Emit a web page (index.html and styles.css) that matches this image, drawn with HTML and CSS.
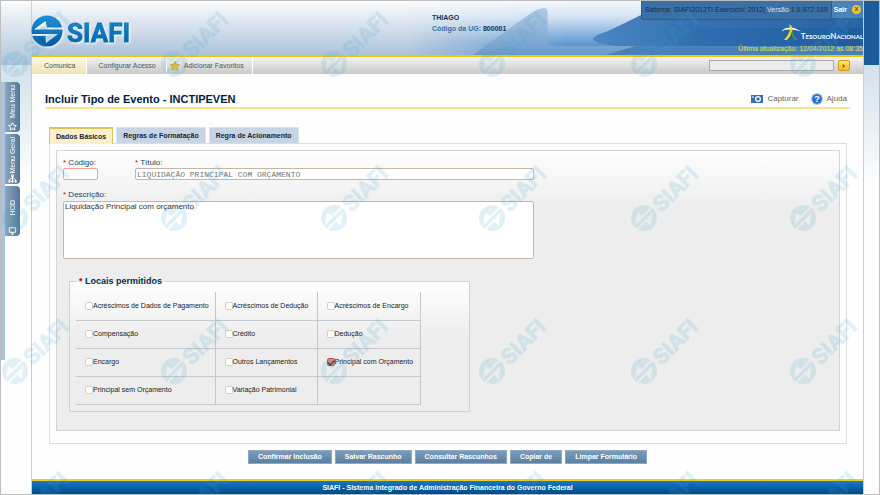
FILE: index.html
```html
<!DOCTYPE html>
<html lang="pt-BR">
<head>
<meta charset="utf-8">
<title>SIAFI - Incluir Tipo de Evento</title>
<link rel="stylesheet" href="styles.css">
</head>
<body>
<svg class="defs" width="0" height="0" aria-hidden="true">
  <defs>
    <linearGradient id="logoFill" x1="0" y1="0" x2="0" y2="1">
      <stop offset="0" stop-color="#1b8fd6"/><stop offset="1" stop-color="#005a9e"/>
    </linearGradient>
    <mask id="bolt">
      <rect x="-20" y="-20" width="40" height="40" fill="#fff"/>
      <path d="M-13 -1.500 L-1.500 -10 L0 -3.500 H16 V-1.500 Z M-16 3 H11 L-1 12 L-1.500 5 H-16 Z" fill="#000"/>
    </mask>
    <g id="mark"><circle r="15.500" mask="url(#bolt)"/></g>
    <g id="wm" transform="rotate(-45)">
      <circle r="15.500" mask="url(#bolt)" transform="scale(.84)"/>
      <text x="16" y="9">SIAFI</text>
    </g>
  </defs>
</svg>

<div class="page">
  <aside class="side">
    <nav class="side-tabs">
      <a href="#"><span>Meu Menu</span>
        <svg viewBox="0 0 10 10"><path d="M5 .8l1.300 2.800 3 .3-2.300 2 .7 3L5 7.400 2.300 8.900l.7-3-2.300-2 3-.3z"/></svg></a>
      <a href="#"><span>Menu Geral</span>
        <svg viewBox="0 0 10 10"><path d="M5 2v3M1.500 8.500V6.500L5 4l3.500 2.500v2M5 4v4.500M4 1h2v2H4zM.8 7.500h1.500v1.500H.8zM4.200 7.500h1.500v1.500H4.200zM7.700 7.500h1.500v1.500H7.700z"/></svg></a>
      <a href="#"><span>HOD</span>
        <svg viewBox="0 0 10 10"><path d="M1.500 2h7v5h-7zM3.500 9h3M5 7v2"/></svg></a>
    </nav>
  </aside>

  <div class="shell">
    <header class="header">
      <svg class="swoosh" viewBox="0 0 458 54" preserveAspectRatio="none" aria-hidden="true">
        <defs>
          <linearGradient id="sky" x1="0" y1="0" x2="0" y2="1">
            <stop offset="0" stop-color="#f4f8fd"/><stop offset=".3" stop-color="#d2e2f4"/><stop offset=".8" stop-color="#5f98cf"/><stop offset="1" stop-color="#5f98cf"/>
          </linearGradient>
          <linearGradient id="fade"><stop offset="0" stop-color="#000"/><stop offset=".35" stop-color="#fff"/></linearGradient>
          <mask id="fadeMask"><rect width="458" height="54" fill="url(#fade)"/></mask>
          <linearGradient id="hill" x1="0" y1="0" x2="0" y2="1">
            <stop offset="0" stop-color="#b3cbe4"/><stop offset="1" stop-color="#6a9aca"/>
          </linearGradient>
          <linearGradient id="deep"><stop offset="0" stop-color="#4c88c2"/><stop offset=".4" stop-color="#2f6dae"/><stop offset="1" stop-color="#1f5c9f"/></linearGradient>
        </defs>
        <rect width="458" height="54" fill="url(#sky)" mask="url(#fadeMask)"/>
        <path d="M67 54 L124 13 Q132 7 139 7 Q142 8 142 12 V40 Q142 45 148 45 H458 V54 Z" fill="url(#hill)"/>
        <path d="M187 38 Q190 34 200 31 Q225 20 262 0 H458 V45 H210 Q190 43 187 38 Z" fill="url(#deep)"/>
        <path d="M230 45 H458 V54 H200 Z" fill="#2f6dae" opacity=".6"/>
        <path d="M286 0 V22 Q286 27 292 27 H458 V0 Z" fill="#6fa0cf" opacity=".12"/>
      </svg>
      <svg class="logo" viewBox="0 0 112 36" role="img" aria-label="SIAFI">
        <use href="#mark" x="15" y="17" fill="url(#logoFill)"/>
        <text x="35" y="28" fill="url(#logoFill)">SIAFI</text>
      </svg>
      <div class="user">
        <strong>THIAGO</strong>
        <p>Código da UG: <strong>800001</strong></p>
      </div>
      <div class="status">
        <div class="status-bar">
          <p>Sistema: SIAFI2012TI Exercício: 2012| <b>Versão</b> 1.6.972.169</p>
          <a href="#" class="exit">Sair <i>x</i></a>
        </div>
        <div class="brand">
          <svg viewBox="0 0 20 17" aria-hidden="true">
            <path d="M0 7Q9 0 20 7.500Q10 4 0 7z" fill="#fff"/>
            <path d="M8 0q4 2 3.500 6q-1.500 6-5.500 10h-3q5-6 6-10q.5-3-1-6z" fill="#f5d923"/>
            <path d="M11.500 6q0 6 5 10h-2.500q-4-4-3.500-8z" fill="#38a34a"/>
          </svg>
          <span>TesouroNacional</span>
        </div>
        <p class="updated">Última atualização: 12/04/2012 às 08:35</p>
      </div>
    </header>

    <nav class="menubar">
      <a href="#" class="active">Comunica</a>
      <a href="#">Configurar Acesso</a>
      <a href="#" class="fav"><svg viewBox="0 0 10 10" aria-hidden="true"><path d="M5 .3l1.400 3.100 3.400.3-2.600 2.200.8 3.400L5 7.500 2 9.300l.8-3.400L.2 3.700l3.400-.3z"/></svg>Adicionar Favoritos</a>
      <form class="search">
        <input type="text" aria-label="Pesquisar">
        <button type="button" aria-label="Ir"><svg viewBox="0 0 6 6"><path d="M1 0l4 3-4 3z"/></svg></button>
      </form>
    </nav>

    <main class="content">
      <div class="title">
        <h1>Incluir Tipo de Evento - INCTIPEVEN</h1>
        <a href="#"><svg viewBox="0 0 12 10" aria-hidden="true"><path d="M0 1h12v8H0z" fill="#3a6fb5"/><circle cx="7" cy="5" r="3" fill="#fff"/><circle cx="7" cy="5" r="1.700" fill="#3a6fb5"/><path d="M1 2.500h2v1H1z" fill="#fff"/></svg>Capturar</a>
        <a href="#"><svg viewBox="0 0 12 12" aria-hidden="true"><circle cx="6" cy="6" r="6" fill="#b5c3d6"/><circle cx="6" cy="6" r="4.800" fill="#2a6fd6"/><text x="6" y="9" text-anchor="middle" fill="#fff" class="q">?</text></svg>Ajuda</a>
      </div>

      <div class="tabs" role="tablist">
        <button type="button" role="tab" aria-selected="true">Dados Básicos</button>
        <button type="button" role="tab">Regras de Formatação</button>
        <button type="button" role="tab">Regra de Acionamento</button>
      </div>

      <form class="panel">
        <div class="inner">
          <div class="fields">
            <div class="field code"><label for="codigo"><em>*</em> Código:</label><input id="codigo" type="text"></div>
            <div class="field name"><label for="titulo"><em>*</em> Título:</label><input id="titulo" type="text" value="LIQUIDAÇÃO PRINCIPAL COM ORÇAMENTO"></div>
            <div class="field desc"><label for="descricao"><em>*</em> Descrição:</label><textarea id="descricao">Liquidação Principal com orçamento</textarea></div>
          </div>
          <fieldset>
            <legend><em>*</em> Locais permitidos</legend>
            <table>
              <tr>
                <td><label><input type="checkbox">Acréscimos de Dados de Pagamento</label></td>
                <td><label><input type="checkbox">Acréscimos de Dedução</label></td>
                <td><label><input type="checkbox">Acréscimos de Encargo</label></td>
              </tr>
              <tr>
                <td><label><input type="checkbox">Compensação</label></td>
                <td><label><input type="checkbox">Crédito</label></td>
                <td><label><input type="checkbox">Dedução</label></td>
              </tr>
              <tr>
                <td><label><input type="checkbox">Encargo</label></td>
                <td><label><input type="checkbox">Outros Lançamentos</label></td>
                <td><label><input type="checkbox" checked>Principal com Orçamento</label></td>
              </tr>
              <tr>
                <td><label><input type="checkbox">Principal sem Orçamento</label></td>
                <td><label><input type="checkbox">Variação Patrimonial</label></td>
                <td></td>
              </tr>
            </table>
          </fieldset>
        </div>
      </form>

      <div class="actions">
        <button type="button">Confirmar Inclusão</button>
        <button type="button">Salvar Rascunho</button>
        <button type="button">Consultar Rascunhos</button>
        <button type="button">Copiar de</button>
        <button type="button">Limpar Formulário</button>
      </div>
    </main>

    <footer class="footer">SIAFI - Sistema Integrado de Administração Financeira do Governo Federal</footer>
  </div>

  <svg class="watermarks" aria-hidden="true">
    <g id="wmrow">
      <use href="#wm" x="14" y="63"/><use href="#wm" x="173" y="63"/><use href="#wm" x="333" y="63"/>
      <use href="#wm" x="491" y="63"/><use href="#wm" x="643" y="63"/><use href="#wm" x="802" y="63"/>
    </g>
    <use href="#wmrow" y="154"/><use href="#wmrow" y="307"/><use href="#wmrow" y="460"/>
  </svg>
</div>
</body>
</html>
```
FILE: styles.css
```css
* { box-sizing: border-box; }

body {
  margin: 0;
  font: 7px/10px "Liberation Sans", Arial, sans-serif;
  color: #333;
}

p, h1 { margin: 0; }
a { color: inherit; text-decoration: none; }
em { color: #e00000; font-style: normal; }
button, input, textarea { font: inherit; margin: 0; }
.defs { position: absolute; }

.page {
  position: relative;
  display: grid;
  grid-template-columns: 30px minmax(0, 1fr) 15px;
  min-height: 100vh;
  border: 1px solid #bdbdbd;
  overflow: hidden;
  background:
    linear-gradient(90deg, transparent 50%, #1d5a9c 50%) 0 0 / 100% 64px no-repeat,
    linear-gradient(#fafcfd, #adc3da) 0 0 / 100% 64px no-repeat,
    linear-gradient(#d3e1ea, #fefefe) 0 64px / 100% 120px no-repeat,
    #fefefe;
}

/* Left gutter */
.side { padding-top: 81px; }
.side-tabs {
  width: 19px;
  height: 278px;
  display: flex;
  flex-direction: column;
  gap: 2px;
  padding-left: 4px;
  background: linear-gradient(90deg, #a9c2e2 4px, transparent 4px);
}
.side-tabs a {
  height: 50px;
  display: flex;
  flex-direction: column;
  align-items: center;
  justify-content: space-between;
  padding: 3px 0 1px;
  border-radius: 0 4px 4px 0;
  background: linear-gradient(90deg, #8aa7bd, #54789a);
  color: #fff;
}
.side-tabs span {
  writing-mode: vertical-rl;
  transform: rotate(180deg);
  line-height: 8px;
  white-space: nowrap;
}
.side-tabs a:last-child { padding-top: 14px; }
.side-tabs svg { flex: none; width: 9px; height: 9px; fill: none; stroke: #fff; }

.shell {
  display: flex;
  flex-direction: column;
  border: solid #c6ced8;
  border-width: 0 1px;
}

/* Header */
.header {
  position: relative;
  display: flex;
  height: 56px;
  border-bottom: 2px solid #f3c60d;
  background: linear-gradient(#fafcfd, #adc3da);
}
.swoosh { position: absolute; left: 45%; top: 0; width: 55%; height: 54px; }
.logo { width: 112px; height: 36px; margin-top: 13px; overflow: visible; filter: drop-shadow(1px 1px 1px #fff); }
.logo text {
  font: bold 26px Roboto, sans-serif;
  stroke: #0d74b8;
  stroke-width: .8px;
}
.user { position: relative; margin-left: 288px; padding-top: 12px; color: #3b6ea3; font-weight: bold; }
.user > strong { display: block; }
.user strong { color: #12304f; }
.user p { padding-top: 1px; }
.status { position: relative; flex: 1; display: flex; flex-direction: column; align-items: flex-end; color: #fff; }
.status-bar { display: flex; }
.status-bar p {
  padding: 4px 3px;
  background: #3b70a6;
  color: #15304e;
  border: solid #2a5d93;
  border-width: 0 1px 1px;
  border-radius: 0 0 3px 3px;
}
.status-bar b { color: #d5e4f3; font-weight: normal; }
.exit {
  display: flex;
  align-items: center;
  gap: 5px;
  height: 17px;
  padding: 0 2px;
  background: #4d82b8;
  font-weight: bold;
}
.exit i {
  width: 9px;
  height: 9px;
  border-radius: 50%;
  background: #f2c62c;
  color: #6b5200;
  font-style: normal;
  line-height: 8px;
  text-align: center;
}
.brand { display: flex; align-items: flex-end; margin-top: 4px; }
.brand svg { width: 20px; height: 17px; }
.brand span { font: bold 8px/9px Lato, sans-serif; font-variant: small-caps; }
.updated { color: #dbe14a; padding-top: 3px; }

/* Menu bar */
.menubar {
  display: flex;
  height: 17px;
  background: linear-gradient(#f3f3f3, #c9c9c9);
  color: #555;
}
.menubar > a {
  display: flex;
  align-items: center;
  padding: 0 10px 0 12px;
  border-right: 1px solid #fff;
}
.menubar > .fav { padding: 0 8px 0 3px; gap: 4px; }
.menubar .active { background: linear-gradient(#fdf9e4, #efe3b5); }
.fav svg { width: 10px; height: 10px; fill: #f0c419; stroke: #a8851a; stroke-width: .5px; }
.search { display: flex; align-items: center; gap: 4px; margin-left: auto; padding-right: 13px; }
.search input { width: 125px; height: 11px; border: 1px solid #aaa; background: #ececec; padding: 0 2px; }
.search button {
  width: 12px;
  height: 11px;
  display: grid;
  place-items: center;
  border: 1px solid #c99d16;
  border-radius: 2px;
  background: linear-gradient(#ffe76a, #f2bd1c);
  padding: 0;
}
.search svg { width: 4px; height: 4px; fill: #b3440c; }

/* Content */
.content { flex: 1; padding: 17px 13px 15px; background: #fefefe; }
.title {
  display: flex;
  align-items: center;
  gap: 12px;
  height: 18px;
  border-bottom: 2px solid #fbe392;
  padding-right: 3px;
  color: #666;
}
.title h1 { flex: 1; font-size: 11px; color: #002244; }
.title a { display: flex; align-items: center; gap: 4px; font-size: 8px; }
.title svg { width: 12px; height: 12px; }
.q { font-size: 9px; font-weight: bold; }

.tabs { display: flex; gap: 3px; padding: 18px 4px 0; }
.tabs button {
  height: 16px;
  padding: 1px 6px 0;
  border: 1px solid #dbe4ee;
  border-bottom: 0;
  background: #c6d4e4;
  color: #223;
  font-weight: bold;
}
.tabs button[aria-selected="true"] {
  height: 17px;
  margin-bottom: -1px;
  padding-top: 0;
  border-color: #e0c25a;
  border-top-width: 2px;
  background: #faf0cc;
}

.panel { margin: 0 3px 0 4px; padding: 6px 6px 12px; border: 1px solid #ddd; }
.inner {
  min-height: 281px;
  padding: 7px 6px;
  border: 1px solid #d4d4d4;
  background: linear-gradient(#fefefe, #ededed 58px);
}
.fields { width: 471px; display: grid; grid-template-columns: 35px 1fr; gap: 17px 37px; }
.field label { display: block; font-size: 8px; line-height: 10px; color: #1c4566; }
.field.desc { grid-column: 1 / -1; }
.field input, .field textarea {
  display: block;
  width: 100%;
  height: 12px;
  padding: 0 1px;
  border: 1px solid #c4b8a4;
  border-radius: 2px;
  background: #fff;
  color: #333;
}
.field.code input { border-color: #ff9d8c; }
.field.name input { font: 8px "Liberation Mono", monospace; color: #777; }
.field.desc { margin-top: -7px; }
.field.desc label { padding-bottom: 1px; }
.field textarea { height: 58px; font-size: 8px; line-height: 10px; resize: none; }

fieldset {
  width: 401px;
  margin: 17px 0 0 6px;
  padding: 6px;
  border: 1px solid #d2d2d2;
  background: linear-gradient(#fefefe, #ededed 56px);
}
legend { padding: 0 3px; font-size: 9px; font-weight: bold; color: #002f52; }
table { width: 345px; border-collapse: collapse; table-layout: fixed; }
td { height: 28px; padding: 0 0 0 9px; border: 1px solid #c5c7cc; border-width: 0 1px 1px 0; }
td:first-child { width: 139px; }
td:nth-child(2) { width: 102px; }
td label { display: flex; align-items: center; color: #222; white-space: nowrap; }
td input {
  appearance: none;
  width: 8px;
  height: 8px;
  border: 1px solid #d8cfc0;
  border-radius: 2px;
  background: #fff;
}
td input:checked {
  border-color: #c8503c;
  background: #e8897a;
  display: grid;
  place-items: center;
}
td input:checked::before {
  content: "";
  width: 5px;
  height: 3px;
  border: solid #222;
  border-width: 0 0 1px 1px;
  transform: rotate(-45deg);
}

.actions { display: flex; justify-content: center; gap: 3px; padding-top: 6px; }
.actions button {
  height: 14px;
  padding: 0 9px;
  border: 1px solid #8fa9c2;
  background: linear-gradient(#7b9cbc, #5a7fa3);
  color: #fff;
  font-weight: bold;
}

.footer {
  height: 15px;
  border-top: 2px solid #f0cd26;
  background: linear-gradient(#1579c6, #004a86);
  color: #fff;
  font-weight: bold;
  line-height: 13px;
  text-align: center;
}

/* Watermark layer */
.watermarks {
  position: absolute;
  inset: 0;
  width: 100%;
  height: 100%;
  pointer-events: none;
  fill: #3aa3d0;
  opacity: .15;
}
#wm text {
  font: bold 22px Roboto, sans-serif;
  stroke: #3aa3d0;
  stroke-width: 1px;
}
```
